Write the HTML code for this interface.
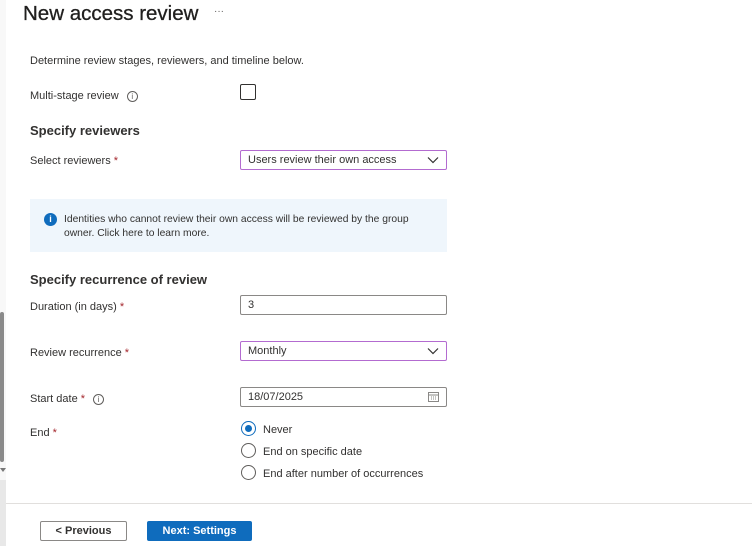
<!DOCTYPE html>
<html><head><style>
*{margin:0;padding:0;box-sizing:border-box}
body{width:752px;height:546px;background:#fff;font-family:"Liberation Sans",sans-serif;color:#323130;position:relative;overflow:hidden;font-size:11px}
.a{position:absolute}
.lbl{position:absolute;left:30px;font-size:11px;color:#323130}
.req{color:#a4262c}
.box{position:absolute;left:240px;width:207px;height:20px;border:1px solid #8a8886;border-radius:2px;padding-left:7px;line-height:19px;font-size:11px}
.dd{border-color:#b36bd0}
.chev{position:absolute;right:7px;top:5px}
.info{display:inline-block;width:11px;height:11px;border:1px solid #605e5c;border-radius:50%;font-size:8px;line-height:9px;text-align:center;color:#605e5c;vertical-align:0px;margin-left:5px}
h2{position:absolute;left:30px;font-size:13px;font-weight:bold;color:#323130}
.radio{position:absolute;left:241px;width:15px;height:15px;border:1px solid #605e5c;border-radius:50%}
.rl{position:absolute;left:263px;font-size:11px}
</style></head><body>
<div class="a" style="left:0;top:0;width:6px;height:480px;background:#f8f8f8"></div>
<div class="a" style="left:0;top:312px;width:4px;height:150px;background:#8a8a8a;border-radius:2px"></div>
<div class="a" style="left:0;top:468px;width:0;height:0;border-left:3px solid transparent;border-right:3px solid transparent;border-top:4px solid #777"></div>
<div class="a" style="left:0;top:480px;width:6px;height:66px;background:#e8e8e8"></div>
<div class="a" style="left:23px;top:2px;font-size:20.5px;color:#201f1e;-webkit-text-stroke:0.3px #201f1e">New access review</div>
<div class="a" style="left:214px;top:6px;font-size:10px;color:#605e5c">···</div>
<div class="lbl" style="top:55px">Determine review stages, reviewers, and timeline below.</div>
<div class="lbl" style="top:90px">Multi-stage review <span class="info">i</span></div>
<div class="a" style="left:240px;top:84px;width:16px;height:16px;border:1px solid #323130;border-radius:2px"></div>
<h2 style="top:123px">Specify reviewers</h2>
<div class="lbl" style="top:155px">Select reviewers <span class="req">*</span></div>
<div class="box dd" style="top:150px">Users review their own access<svg class="chev" width="12" height="8" viewBox="0 0 12 8"><path d="M1 1.5l5 5 5-5" fill="none" stroke="#323130" stroke-width="1.2"/></svg></div>
<div class="a" style="left:30px;top:199px;width:417px;height:53px;background:#eff6fc"></div>
<div class="a" style="left:44px;top:213px;width:13px;height:13px;border-radius:50%;background:#0f6cbd;color:#fff;font-size:9px;font-weight:bold;text-align:center;line-height:13px">i</div>
<div class="a" style="left:64px;top:213px;font-size:10.3px;line-height:14px;width:360px">Identities who cannot review their own access will be reviewed by the group owner. Click here to learn more.</div>
<h2 style="top:272px">Specify recurrence of review</h2>
<div class="lbl" style="top:301px">Duration (in days) <span class="req">*</span></div>
<div class="box" style="top:295px">3</div>
<div class="lbl" style="top:347px">Review recurrence <span class="req">*</span></div>
<div class="box dd" style="top:341px">Monthly<svg class="chev" width="12" height="8" viewBox="0 0 12 8"><path d="M1 1.5l5 5 5-5" fill="none" stroke="#323130" stroke-width="1.2"/></svg></div>
<div class="lbl" style="top:393px">Start date <span class="req">*</span> <span class="info">i</span></div>
<div class="box" style="top:387px">18/07/2025<svg class="chev" style="top:4px" width="11" height="10" viewBox="0 0 11 10"><rect x="0.5" y="0.5" width="10" height="9" fill="none" stroke="#8a8886"/><path d="M0.5 3h10M3 5h1M5 5h1M7 5h1M3 7h1M5 7h1M7 7h1" stroke="#8a8886"/></svg></div>
<div class="lbl" style="top:427px">End <span class="req">*</span></div>
<div class="radio" style="top:421px;border-color:#0f6cbd"><div style="position:absolute;left:3px;top:3px;width:7px;height:7px;border-radius:50%;background:#0f6cbd"></div></div>
<div class="rl" style="top:424px">Never</div>
<div class="radio" style="top:443px"></div>
<div class="rl" style="top:446px">End on specific date</div>
<div class="radio" style="top:465px"></div>
<div class="rl" style="top:468px">End after number of occurrences</div>
<div class="a" style="left:6px;top:503px;width:746px;height:1px;background:#e1dfdd"></div>
<div class="a" style="left:40px;top:521px;width:87px;height:20px;border:1px solid #8a8886;border-radius:2px;text-align:center;line-height:19px;font-size:11px;font-weight:bold">&lt; Previous</div>
<div class="a" style="left:147px;top:521px;width:105px;height:20px;background:#0f6cbd;border-radius:2px;text-align:center;line-height:21px;font-size:11px;font-weight:bold;color:#fff">Next: Settings</div>
</body></html>
